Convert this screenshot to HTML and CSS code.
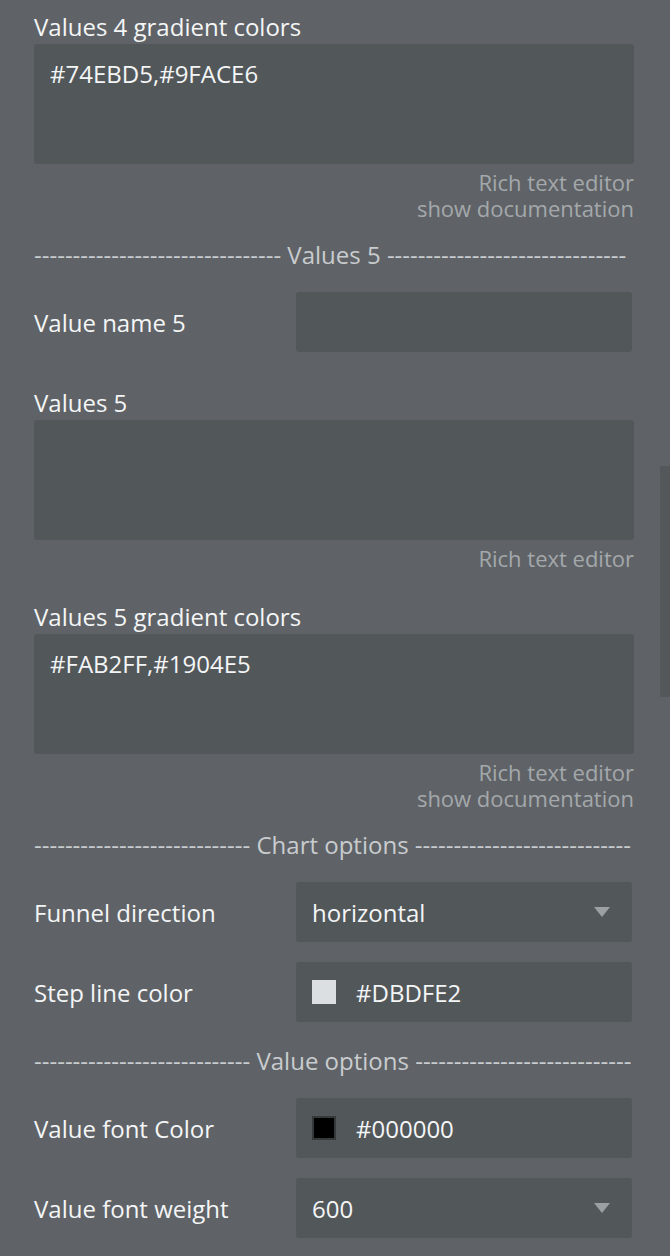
FILE: index.html
```html
<!DOCTYPE html>
<html lang="en">

<head>
  <meta charset="UTF-8" />
  <meta name="viewport" content="width=device-width, initial-scale=1.0" />
  <title>Funnel chart properties</title>
  <link rel="stylesheet" href="styles.css">
</head>

<body>
  <div class="panel">
    <!-- values 4 -->
    <div class="field first">
      <label class="label">Values 4 gradient colors</label>
      <div class="textarea">#74EBD5,#9FACE6</div>
      <div class="hint">
        <span>Rich text editor</span>
        <span>show documentation</span>
      </div>
    </div>

    <div class="divider">-------------------------------- Values 5 -------------------------------</div>

    <div class="row after-divider">
      <label class="row-label">Value name 5</label>
      <div class="input"></div>
    </div>

    <div class="field after-row">
      <label class="label">Values 5</label>
      <div class="textarea"></div>
      <div class="hint">
        <span>Rich text editor</span>
      </div>
    </div>

    <div class="field after-hint">
      <label class="label">Values 5 gradient colors</label>
      <div class="textarea">#FAB2FF,#1904E5</div>
      <div class="hint">
        <span>Rich text editor</span>
        <span>show documentation</span>
      </div>
    </div>

    <div class="divider">---------------------------- Chart options ----------------------------</div>

    <div class="row after-divider">
      <label class="row-label">Funnel direction</label>
      <div class="input select">horizontal<span class="caret"></span></div>
    </div>

    <div class="row next-row">
      <label class="row-label">Step line color</label>
      <div class="input color"><span class="swatch light"></span>#DBDFE2</div>
    </div>

    <div class="divider after-rows">---------------------------- Value options ----------------------------</div>

    <div class="row after-divider">
      <label class="row-label">Value font Color</label>
      <div class="input color"><span class="swatch dark"></span>#000000</div>
    </div>

    <div class="row next-row">
      <label class="row-label">Value font weight</label>
      <div class="input select">600<span class="caret"></span></div>
    </div>
  </div>

  <div class="scroll-thumb"></div>
</body>

</html>
```

FILE: styles.css
```css
body {
  margin: 0;
  padding: 0;
  background-color: #5f6367;
  color: #f4f5f6;
  font-family: "Open Sans", "DejaVu Sans", sans-serif;
  font-size: 24px;
  height: 1256px;
  overflow: hidden;
  position: relative;
}

.panel {
  width: 600px;
  margin-left: 34px;
  display: flex;
  flex-direction: column;
}

.label {
  display: block;
  line-height: 30px;
  margin-bottom: 2px;
}

.textarea {
  height: 120px;
  box-sizing: border-box;
  padding: 15px 16px;
  line-height: 30px;
  background-color: #52575a;
  border-radius: 3px;
}

.hint {
  display: flex;
  flex-direction: column;
  align-items: flex-end;
  margin-top: 5px;
  font-size: 22px;
  line-height: 26px;
  color: #a4a8ab;
}

.hint span {
  display: block;
  height: 26px;
}

.field.first {
  margin-top: 12px;
}

.field.after-row {
  margin-top: 36px;
}

.field.after-hint {
  margin-top: 31px;
}

.divider {
  margin-top: 18px;
  line-height: 32px;
  white-space: nowrap;
  color: #c9ccce;
}

.divider.after-rows {
  margin-top: 23px;
}

.row {
  display: flex;
  align-items: center;
  width: 598px;
}

.row.after-divider {
  margin-top: 21px;
}

.row.next-row {
  margin-top: 20px;
}

.row-label {
  width: 262px;
}

.input {
  flex: 1;
  height: 60px;
  box-sizing: border-box;
  padding: 0 16px;
  display: flex;
  align-items: center;
  background-color: #52575a;
  border-radius: 3px;
}

.select {
  justify-content: space-between;
}

.caret {
  width: 0;
  height: 0;
  margin-right: 6px;
  border-left: 8px solid transparent;
  border-right: 8px solid transparent;
  border-top: 10px solid #9ca0a3;
}

.swatch {
  width: 24px;
  height: 24px;
  box-sizing: border-box;
  margin-right: 20px;
}

.swatch.light {
  background-color: #dbdfe2;
}

.swatch.dark {
  background-color: #000;
  border: 2px solid #36393b;
}

.scroll-thumb {
  position: absolute;
  left: 660px;
  top: 466px;
  width: 10px;
  height: 231px;
  background-color: #54585b;
}
```
